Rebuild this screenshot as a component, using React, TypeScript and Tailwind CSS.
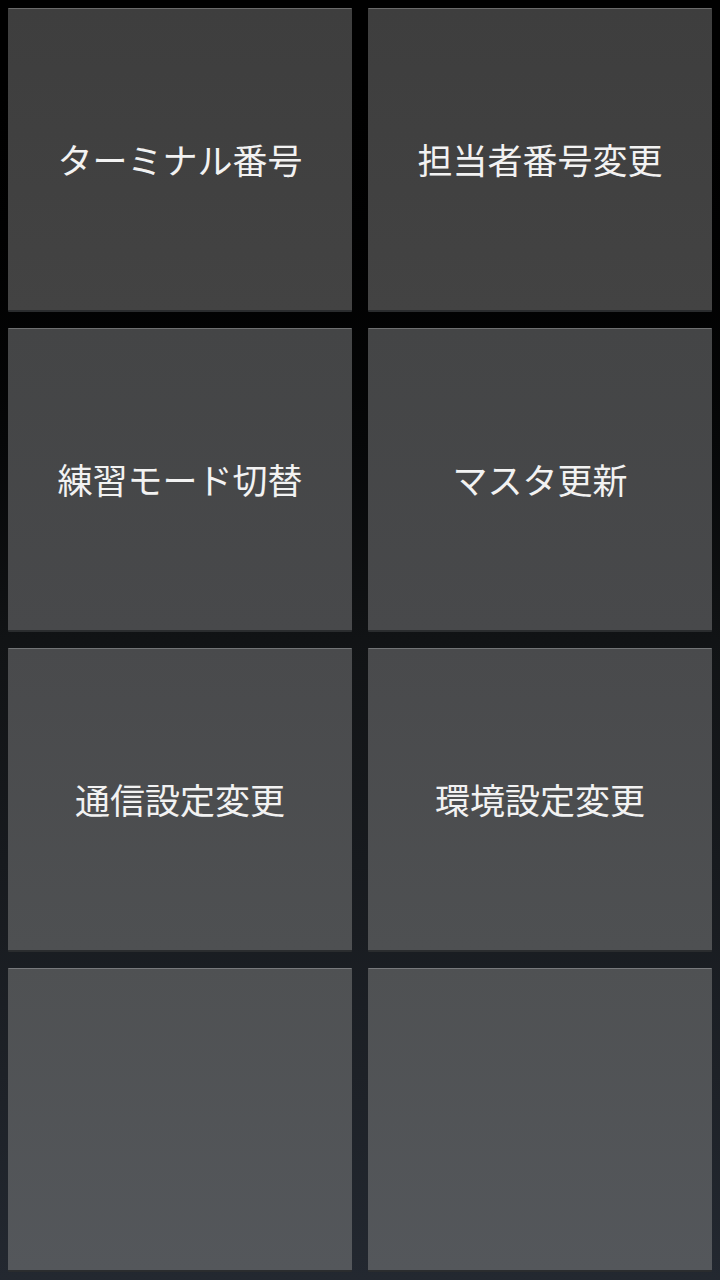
const rows = [
  { items: ["ターミナル番号", "担当者番号変更"], bg: "bg-gradient-to-b from-[#3e3e3e] to-[#434343]", edge: "border-t-[#6a6a6a]" },
  { items: ["練習モード切替", "マスタ更新"], bg: "bg-gradient-to-b from-[#444546] to-[#48494b]", edge: "border-t-[#6e6f70]" },
  { items: ["通信設定変更", "環境設定変更"], bg: "bg-gradient-to-b from-[#494a4c] to-[#4e5052]", edge: "border-t-[#727476]" },
  { items: ["", ""], bg: "bg-gradient-to-b from-[#4f5153] to-[#54575b]", edge: "border-t-[#77797c]" },
];

export default function App() {
  return (
    <main
      className="w-[720px] h-[1280px] bg-gradient-to-b from-[#000000] via-[#111315] to-[#232830] p-2 flex flex-col gap-4"
      style={{ fontFamily: '"Noto Sans CJK JP", "Noto Sans", sans-serif' }}
    >
      {rows.map((row, i) => (
        <div key={i} className="grid grid-cols-2 gap-4 h-[304px]">
          {row.items.map((label, j) => (
            <button
              key={j}
              className={`${row.bg} ${row.edge} border-t border-b-2 border-b-[#2a2c2e] rounded-[1px] flex items-center justify-center text-[35px] text-[#f2f2f2]`}
            >
              {label}
            </button>
          ))}
        </div>
      ))}
    </main>
  );
}
